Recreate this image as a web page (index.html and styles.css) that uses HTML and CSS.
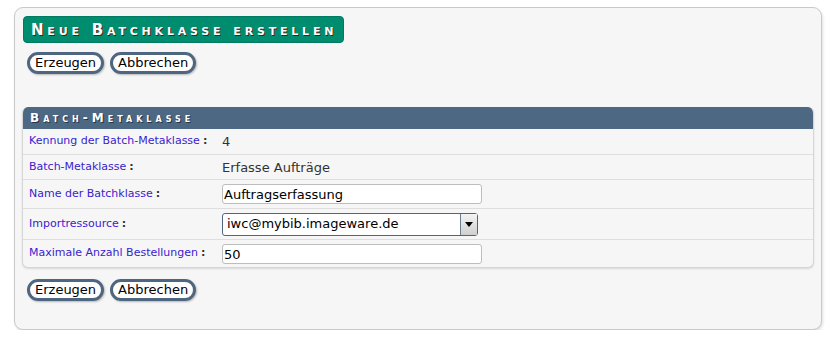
FILE: index.html
```html
<!DOCTYPE html>
<html lang="de">
<head>
    <meta charset="UTF-8">
    <title>Neue Batchklasse erstellen</title>
    <link rel="stylesheet" href="styles.css">
</head>
<body>
    <div class="panel">
        <h1 class="page-title">Neue Batchklasse erstellen</h1>
        <div class="actions">
            <button class="btn">Erzeugen</button>
            <button class="btn">Abbrechen</button>
        </div>

        <div class="section">
            <h2 class="section-title">Batch-Metaklasse</h2>
            <div class="row row-1">
                <div class="label">Kennung der Batch-Metaklasse<span class="colon">:</span></div>
                <div class="value">4</div>
            </div>
            <div class="row row-2">
                <div class="label">Batch-Metaklasse<span class="colon">:</span></div>
                <div class="value">Erfasse Aufträge</div>
            </div>
            <div class="row row-3">
                <div class="label">Name der Batchklasse<span class="colon">:</span></div>
                <div class="value"><input class="text-input" type="text" value="Auftragserfassung"></div>
            </div>
            <div class="row row-4">
                <div class="label">Importressource<span class="colon">:</span></div>
                <div class="value">
                    <div class="select">
                        <span class="select-text">iwc@mybib.imageware.de</span>
                        <span class="select-arrow"></span>
                    </div>
                </div>
            </div>
            <div class="row row-5">
                <div class="label">Maximale Anzahl Bestellungen<span class="colon">:</span></div>
                <div class="value"><input class="text-input" type="text" value="50"></div>
            </div>
        </div>

        <div class="actions bottom">
            <button class="btn">Erzeugen</button>
            <button class="btn">Abbrechen</button>
        </div>
    </div>
</body>
</html>
```

FILE: styles.css
```css
body {
    margin: 0;
    background-color: #ffffff;
    font-family: "DejaVu Sans", Verdana, sans-serif;
}
.panel {
    margin: 7px 5px 0 14px;
    height: 323px;
    box-sizing: border-box;
    width: 808px;
    border: 1px solid #c9c9c9;
    border-radius: 9px;
    background-color: #f6f6f6;
    box-shadow: 1px 2px 3px rgba(0,0,0,0.12);
    padding: 8px 7px 0 7px;
}
.page-title {
    display: inline-block;
    margin: 0 0 0 1px;
    height: 27px;
    box-sizing: border-box;
    padding: 3px 6px 0 7px;
    background-color: #008c6f;
    border: 1px solid #007a60;
    border-radius: 4px;
    color: white;
    font-size: 15px;
    font-weight: bold;
    font-variant: small-caps;
    letter-spacing: 3.8px;
    line-height: 20px;
    text-shadow: 1px 1px 0 #3a2a10;
}
.actions {
    display: flex;
    gap: 6px;
    margin: 9px 0 0 5px;
}
.actions.bottom {
    margin-top: 11px;
}
.btn {
    height: 22px;
    padding: 0 5px;
    background-color: white;
    border: 3px solid #4f6680;
    border-radius: 11px;
    box-shadow: 1px 1px 2px rgba(0,0,0,0.25);
    font-family: "DejaVu Sans", Verdana, sans-serif;
    font-size: 13px;
    color: #000;
    line-height: 14px;
}
.section {
    margin-top: 33px;
    background-color: #f6f6f6;
    border: 1px solid #d6d6d6;
    border-top: none;
    border-radius: 6px;
    box-shadow: 0 1px 2px rgba(0,0,0,0.12);
    overflow: hidden;
}
.section-title {
    margin: 0;
    height: 22px;
    padding: 4px 7px 0;
    box-sizing: border-box;
    background-color: #4d6882;
    color: white;
    font-size: 12px;
    font-weight: bold;
    font-variant: small-caps;
    letter-spacing: 4px;
    line-height: 15px;
    text-shadow: 1px 1px 0 #24344a;
}
.row {
    display: flex;
    align-items: center;
    border-top: 1px solid #dedede;
}
.section-title + .row {
    border-top: none;
}
.row-1 { height: 25px; }
.row-2 { height: 24px; }
.row-3 { height: 28px; }
.row-4 { height: 30px; }
.row-5 { height: 27px; }
.label {
    width: 199px;
    box-sizing: border-box;
    padding-left: 6px;
    font-size: 11px;
    color: #3a22d0;
    margin-top: -2px;
}
.colon {
    color: #333;
    font-size: 11px;
    font-weight: bold;
    margin-left: 3px;
}
.value {
    font-size: 13px;
    color: #333;
}
.text-input {
    width: 260px;
    height: 20px;
    box-sizing: border-box;
    border: 1px solid #bdbdbd;
    border-radius: 3px;
    padding: 1px 1px 0;
    font-family: "DejaVu Sans", Verdana, sans-serif;
    font-size: 13px;
    color: #000;
    background: white;
}
.select {
    display: flex;
    width: 256px;
    height: 23px;
    box-sizing: border-box;
    border: 1px solid #4f6680;
    border-radius: 3px;
    background: white;
}
.select-text {
    flex: 1;
    padding: 2px 0 0 4px;
    color: #000;
    font-size: 13px;
}
.select-arrow {
    width: 16px;
    border-left: 1px solid #6b7d90;
    background: linear-gradient(#f4f4f4, #cfcfcf);
    position: relative;
}
.select-arrow:after {
    content: '';
    position: absolute;
    left: 4px;
    top: 8px;
    border: 4px solid transparent;
    border-top: 5px solid #000;
    border-bottom: 0;
}
```
